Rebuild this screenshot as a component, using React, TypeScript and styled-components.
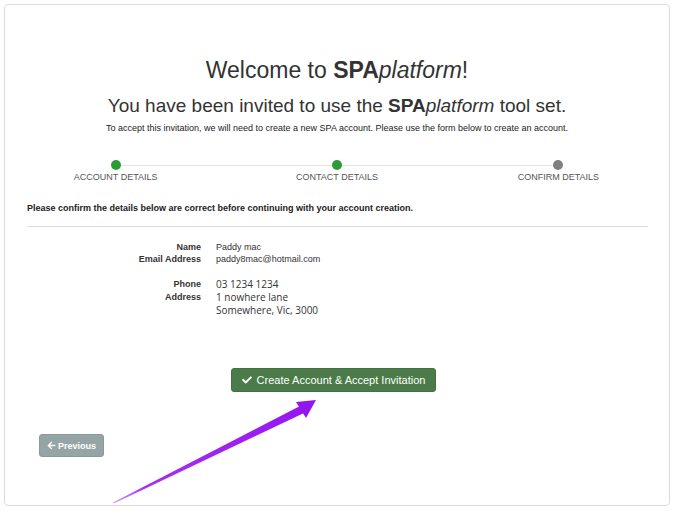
import React from "react";
import styled, { createGlobalStyle } from "styled-components";
import { FaCheck, FaArrowLeft } from "react-icons/fa";

const GlobalStyle = createGlobalStyle`
  html, body { margin: 0; padding: 0; background: #fff; }
  body { font-family: "Liberation Sans", Arial, sans-serif; color: #333; }
  * { box-sizing: border-box; }
`;

const Page = styled.div`
  position: relative;
  width: 677px;
  height: 513px;
  padding: 4px 0 0 4px;
`;

const Card = styled.div`
  width: 666px;
  height: 502px;
  border: 1px solid #dcdcdc;
  border-radius: 4px;
  display: flex;
  flex-direction: column;
  background: #fff;
`;

const Header = styled.header`
  padding-top: 52px;
  text-align: center;
  color: #333;
`;

const Title = styled.h1`
  margin: 0;
  font-size: 23px;
  line-height: 26px;
  font-weight: normal;
`;

const Subtitle = styled.h2`
  margin: 12px 0 0;
  font-size: 19px;
  line-height: 22px;
  font-weight: normal;
`;

const Brand = styled.b`
  font-weight: bold;
`;

const BrandItalic = styled.i`
  font-style: italic;
`;

const Lead = styled.p`
  margin: 5px 0 0;
  font-size: 9px;
  line-height: 12px;
  color: #222;
`;

const Steps = styled.ol`
  list-style: none;
  margin: 26px 0 0;
  padding: 0;
  display: grid;
  grid-template-columns: repeat(3, 1fr);
  position: relative;
  &::before {
    content: "";
    position: absolute;
    top: 5px;
    left: 16.66%;
    right: 16.66%;
    height: 1px;
    background: #e2e2e2;
  }
`;

const Step = styled.li`
  display: flex;
  flex-direction: column;
  align-items: center;
  gap: 2px;
  position: relative;
`;

const Dot = styled.span<{ $done: boolean }>`
  width: 10px;
  height: 10px;
  border-radius: 50%;
  background: ${(p) => (p.$done ? "#2d9b38" : "#808080")};
`;

const StepLabel = styled.span`
  font-size: 9px;
  line-height: 11px;
  color: #555;
  text-transform: uppercase;
`;

const Body = styled.section`
  padding: 0 21px 0 22px;
  display: flex;
  flex-direction: column;
`;

const Intro = styled.p`
  margin: 20px 0 0;
  font-size: 9px;
  line-height: 11px;
  font-weight: bold;
  color: #222;
`;

const Divider = styled.hr`
  margin: 12px 0 0;
  border: 0;
  border-top: 1px solid #dedede;
  height: 0;
`;

const DetailGroup = styled.dl<{ $alt?: boolean }>`
  margin: ${(p) => (p.$alt ? "13px" : "14px")} 0 0;
  display: grid;
  grid-template-columns: 174px 1fr;
  column-gap: 15px;
  font-size: 9px;
`;

const Term = styled.dt`
  text-align: right;
  font-weight: bold;
  color: #333;
  line-height: 12px;
`;

const Value = styled.dd<{ $alt?: boolean }>`
  margin: 0;
  color: #333;
  font-family: ${(p) => (p.$alt ? '"Open Sans", sans-serif' : '"Liberation Sans", Arial, sans-serif')};
  font-size: ${(p) => (p.$alt ? "10px" : "9px")};
  line-height: ${(p) => (p.$alt ? "13px" : "12px")};
`;

const PrimaryRow = styled.div`
  margin-top: 51px;
  display: flex;
  justify-content: center;
  padding-right: 8px;
`;

const PrimaryButton = styled.button`
  display: inline-flex;
  align-items: center;
  gap: 5px;
  height: 24px;
  padding: 0 10px;
  border: 1px solid #43703f;
  border-radius: 3px;
  background: #4a7b48;
  color: #fff;
  font-family: "Liberation Sans", Arial, sans-serif;
  font-size: 11px;
  cursor: pointer;
`;

const SecondaryRow = styled.div`
  margin-top: 42px;
  padding-left: 12px;
  display: flex;
`;

const SecondaryButton = styled.button`
  display: inline-flex;
  align-items: center;
  justify-content: center;
  gap: 2px;
  height: 23px;
  width: 65px;
  padding: 0;
  border: 1px solid #8a9a9b;
  border-radius: 3px;
  background: #95a5a6;
  color: #fff;
  font-family: "Liberation Sans", Arial, sans-serif;
  font-size: 9px;
  font-weight: bold;
  cursor: pointer;
`;

const Annotation = styled.svg`
  position: absolute;
  top: 0;
  left: 0;
  width: 677px;
  height: 513px;
  pointer-events: none;
`;

export default function App() {
  return (
    <>
      <GlobalStyle />
      <Page>
        <Card>
          <Header>
            <Title>
              Welcome to <Brand>SPA</Brand>
              <BrandItalic>platform</BrandItalic>!
            </Title>
            <Subtitle>
              You have been invited to use the <Brand>SPA</Brand>
              <BrandItalic>platform</BrandItalic> tool set.
            </Subtitle>
            <Lead>
              To accept this invitation, we will need to create a new SPA account. Please use the form below to create an account.
            </Lead>
          </Header>
          <Steps>
            <Step>
              <Dot $done />
              <StepLabel>Account Details</StepLabel>
            </Step>
            <Step>
              <Dot $done />
              <StepLabel>Contact Details</StepLabel>
            </Step>
            <Step>
              <Dot $done={false} />
              <StepLabel>Confirm Details</StepLabel>
            </Step>
          </Steps>
          <Body>
            <Intro>Please confirm the details below are correct before continuing with your account creation.</Intro>
            <Divider />
            <DetailGroup>
              <Term>Name</Term>
              <Value>Paddy mac</Value>
              <Term>Email Address</Term>
              <Value>paddy8mac@hotmail.com</Value>
            </DetailGroup>
            <DetailGroup $alt>
              <Term>Phone</Term>
              <Value $alt>03 1234 1234</Value>
              <Term>Address</Term>
              <Value $alt>
                1 nowhere lane
                <br />
                Somewhere, Vic, 3000
              </Value>
            </DetailGroup>
            <PrimaryRow>
              <PrimaryButton>
                <FaCheck size={10} />
                Create Account &amp; Accept Invitation
              </PrimaryButton>
            </PrimaryRow>
            <SecondaryRow>
              <SecondaryButton>
                <FaArrowLeft size={9} />
                Previous
              </SecondaryButton>
            </SecondaryRow>
          </Body>
        </Card>
        <Annotation viewBox="0 0 677 513">
          <defs>
            <linearGradient id="arrowGrad" x1="113" y1="503" x2="316" y2="400" gradientUnits="userSpaceOnUse">
              <stop offset="0" stopColor="#d9a8f7" />
              <stop offset="0.15" stopColor="#a630f2" />
              <stop offset="1" stopColor="#9414f0" />
            </linearGradient>
          </defs>
          <polygon points="112,503 300,406 304,413 115,503" fill="url(#arrowGrad)" />
          <polygon points="296,402 316,400 306,418" fill="#9414f0" />
        </Annotation>
      </Page>
    </>
  );
}
